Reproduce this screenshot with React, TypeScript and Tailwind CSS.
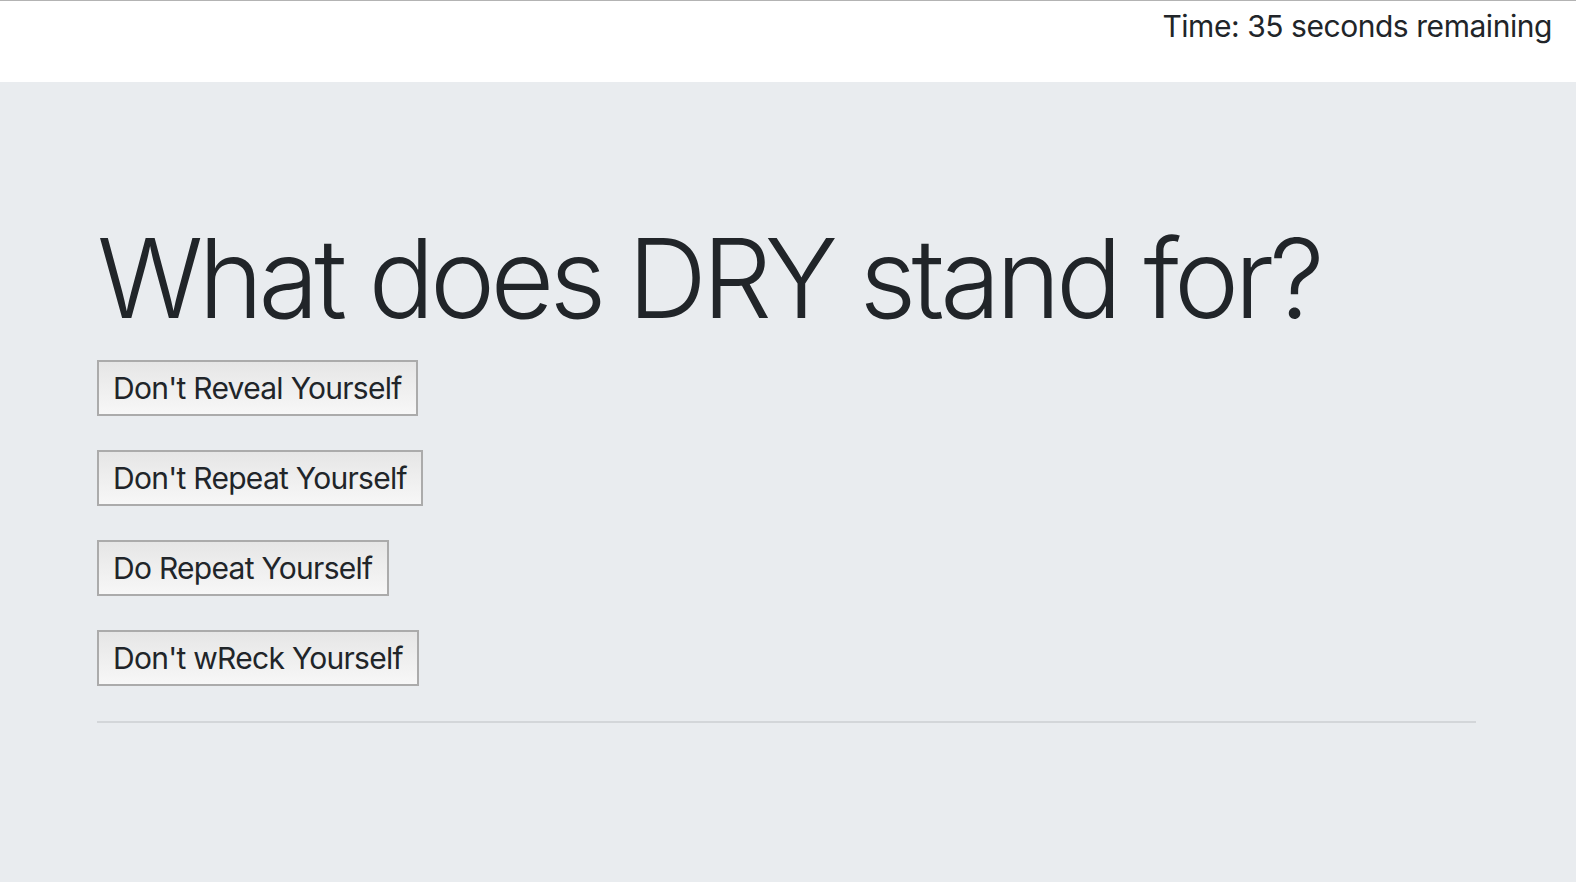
import React from "react";

const answers: string[] = [
  "Don't Reveal Yourself",
  "Don't Repeat Yourself",
  "Do Repeat Yourself",
  "Don't wReck Yourself",
];

function App() {
  return (
    <div
      className="min-h-screen bg-white border-t border-[#b3b3b3] text-[#212529]"
      style={{ fontFamily: "Inter, 'Noto Sans', sans-serif" }}
    >
      {/* Timer */}
      <header className="h-[81px] flex justify-end pr-6 pt-[7px]">
        <span className="text-[30px] leading-[36px] tracking-[-0.015em]">
          Time: 35 seconds remaining
        </span>
      </header>

      {/* Question */}
      <main className="bg-[#e9ecef] h-[800px]">
        <div className="w-[1379px] ml-[97px] pt-[130px]">
          <h1 className="text-[110px] leading-[132px] font-light tracking-[-0.043em]">
            What does DRY stand for?
          </h1>

          <div className="flex flex-col items-start gap-[34px] mt-[16px]">
            {answers.map((answer, index) => (
              <button
                key={index}
                className="h-[56px] px-[14px] border-2 border-[#ababab] bg-gradient-to-b from-[#e6e6e6] to-[#f7f7f7] text-[30px] leading-none tracking-[-0.024em]"
              >
                {answer}
              </button>
            ))}
          </div>

          <hr className="mt-[35px] border-t-2 border-[#d3d6d9]" />
        </div>
      </main>
    </div>
  );
}

export default App;
